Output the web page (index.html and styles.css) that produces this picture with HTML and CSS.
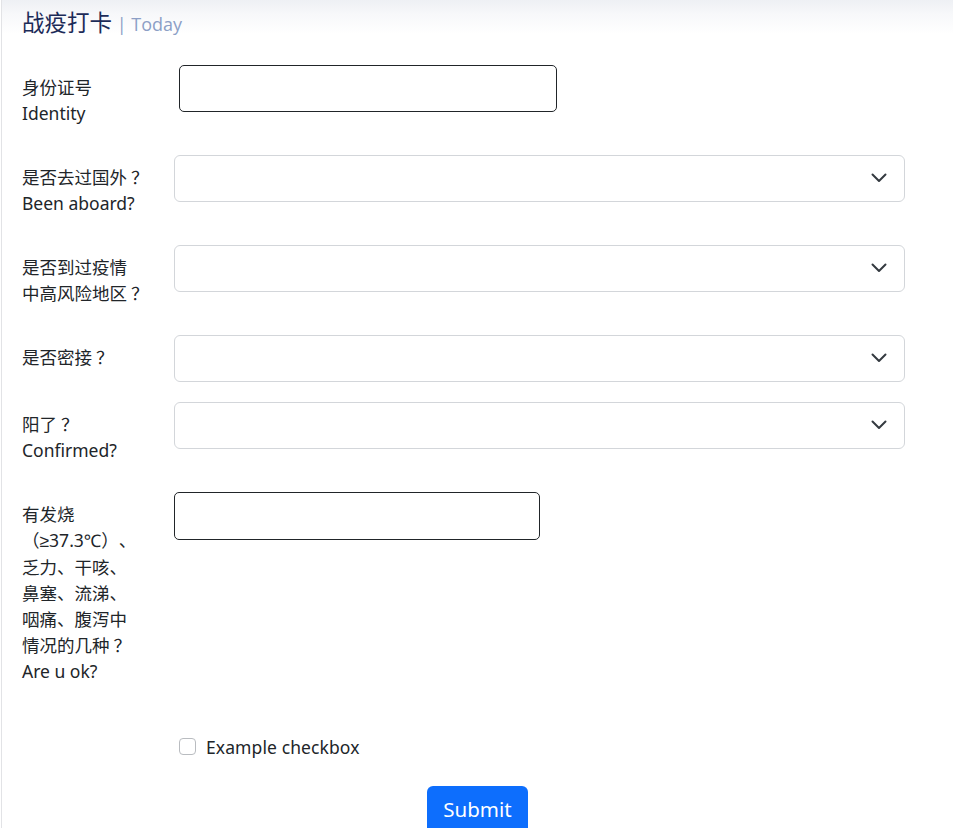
FILE: index.html
```html
<!DOCTYPE html>
<html lang="zh">
<head>
<meta charset="utf-8">
<title>战疫打卡</title>
<link rel="stylesheet" href="styles.css">
</head>
<body>
<div class="page">
  <header class="header">
    <h1 class="title">战疫打卡<span class="sub"> | Today</span></h1>
  </header>
  <form class="form">
    <div class="row">
      <label class="label" for="id">身份证号<br>Identity</label>
      <div class="control">
        <input class="input input-id" id="id" type="text">
      </div>
    </div>
    <div class="row">
      <label class="label" for="abroad">是否去过国外<span class="q">？</span><br>Been aboard?</label>
      <div class="control">
        <div class="select-wrap">
          <select class="select" id="abroad"><option></option></select>
          <svg class="chevron" width="16" height="12" viewBox="0 0 16 12"><path d="M1.5 2.5 8 9l6.5-6.5" fill="none" stroke="#343a40" stroke-width="2" stroke-linecap="round" stroke-linejoin="round"/></svg>
        </div>
      </div>
    </div>
    <div class="row">
      <label class="label" for="risk">是否到过疫情<br>中高风险地区<span class="q">？</span></label>
      <div class="control">
        <div class="select-wrap">
          <select class="select" id="risk"><option></option></select>
          <svg class="chevron" width="16" height="12" viewBox="0 0 16 12"><path d="M1.5 2.5 8 9l6.5-6.5" fill="none" stroke="#343a40" stroke-width="2" stroke-linecap="round" stroke-linejoin="round"/></svg>
        </div>
      </div>
    </div>
    <div class="row">
      <label class="label" for="contact">是否密接<span class="q">？</span></label>
      <div class="control">
        <div class="select-wrap">
          <select class="select" id="contact"><option></option></select>
          <svg class="chevron" width="16" height="12" viewBox="0 0 16 12"><path d="M1.5 2.5 8 9l6.5-6.5" fill="none" stroke="#343a40" stroke-width="2" stroke-linecap="round" stroke-linejoin="round"/></svg>
        </div>
      </div>
    </div>
    <div class="row">
      <label class="label" for="confirmed">阳了<span class="q">？</span><br>Confirmed?</label>
      <div class="control">
        <div class="select-wrap">
          <select class="select" id="confirmed"><option></option></select>
          <svg class="chevron" width="16" height="12" viewBox="0 0 16 12"><path d="M1.5 2.5 8 9l6.5-6.5" fill="none" stroke="#343a40" stroke-width="2" stroke-linecap="round" stroke-linejoin="round"/></svg>
        </div>
      </div>
    </div>
    <div class="row">
      <label class="label" for="symptoms">有发烧<br><span class="cjk">（</span><span class="sym">≥</span>37.3℃<span class="cjk">）、</span><br>乏力、干咳、<br>鼻塞、流涕、<br>咽痛、腹泻中<br>情况的几种<span class="q">？</span><br>Are u ok?</label>
      <div class="control">
        <input class="input input-sym" id="symptoms" type="text">
      </div>
    </div>
    <div class="check-row">
      <input class="checkbox" id="ex" type="checkbox">
      <label class="check-label" for="ex">Example checkbox</label>
    </div>
    <div class="submit-row">
      <button class="btn" type="submit">Submit</button>
    </div>
  </form>
</div>
</body>
</html>
```
FILE: styles.css
```css
html, body {
  margin: 0;
  padding: 0;
  background: #fff;
}
body {
  padding-left: 1px;
  font-family: "Noto Sans", "Noto Sans CJK SC", sans-serif;
  color: #212529;
  overflow: hidden;
  text-spacing-trim: space-all;
}
.page {
  border-left: 1px solid #e2e3e6;
  min-height: 828px;
  box-sizing: border-box;
}
.header {
  background: linear-gradient(to bottom, #eef0f4 0, #f7f8fa 14px, #ffffff 34px);
  padding: 4px 20px 0;
  height: 41px;
}
.title {
  margin: 0;
  font-family: "Noto Sans CJK SC", sans-serif;
  font-weight: 400;
  font-size: 22.5px;
  line-height: 34px;
  color: #1c2b58;
}
.sub {
  font-family: "Open Sans", "Noto Sans", sans-serif;
  font-size: 18px;
  color: #8c9fc6;
}
.form {
  padding: 20px 48px 0 20px;
}
.row {
  display: flex;
  align-items: flex-start;
  margin-bottom: 20px;
}
.label {
  width: 152px;
  flex: none;
  padding: 9px 0;
  font-size: 17.5px;
  line-height: 26px;
  white-space: nowrap;
}
.cjk {
  font-family: "Noto Sans CJK SC", sans-serif;
}
.q {
  font-family: "Noto Sans CJK TC", "Noto Sans CJK SC", sans-serif;
  margin-left: 4px;
}
.sym {
  font-family: "Liberation Sans", sans-serif;
}
.control {
  flex: 1;
}
.input {
  display: block;
  box-sizing: border-box;
  border: 1px solid #212529;
  border-radius: 5px;
  background: #fff;
  font-size: 17px;
  padding: 0 12px;
  outline: none;
}
.input-id {
  margin-left: 5px;
  width: 378px;
  height: 47px;
}
.input-sym {
  width: 366px;
  height: 48px;
}
.select-wrap {
  position: relative;
}
.select {
  display: block;
  width: 100%;
  height: 47px;
  box-sizing: border-box;
  border: 1px solid #d3d6da;
  border-radius: 6px;
  background: #fff;
  appearance: none;
  -webkit-appearance: none;
  font-size: 17px;
  padding: 0 40px 0 12px;
  outline: none;
}
.chevron {
  position: absolute;
  right: 18px;
  top: 17px;
  pointer-events: none;
}
.check-row {
  display: flex;
  align-items: center;
  padding: 20px 0 0 157px;
  height: 27px;
}
.checkbox {
  appearance: none;
  -webkit-appearance: none;
  width: 17px;
  height: 17px;
  margin: 0 10px 0 0;
  box-sizing: border-box;
  border: 1px solid #b9bcc0;
  border-radius: 4px;
  background: #fff;
}
.check-label {
  font-size: 17.5px;
  line-height: 26px;
  letter-spacing: 0.1px;
}
.submit-row {
  display: flex;
  justify-content: center;
  padding-top: 26px;
  margin-left: -20px;
  margin-right: -48px;
}
.btn {
  font-family: "Noto Sans", sans-serif;
  background: #0d6efd;
  color: #fff;
  border: none;
  border-radius: 6px;
  font-size: 20.5px;
  line-height: 30px;
  padding: 8px 16px 10px;
  width: 101px;
}
```
